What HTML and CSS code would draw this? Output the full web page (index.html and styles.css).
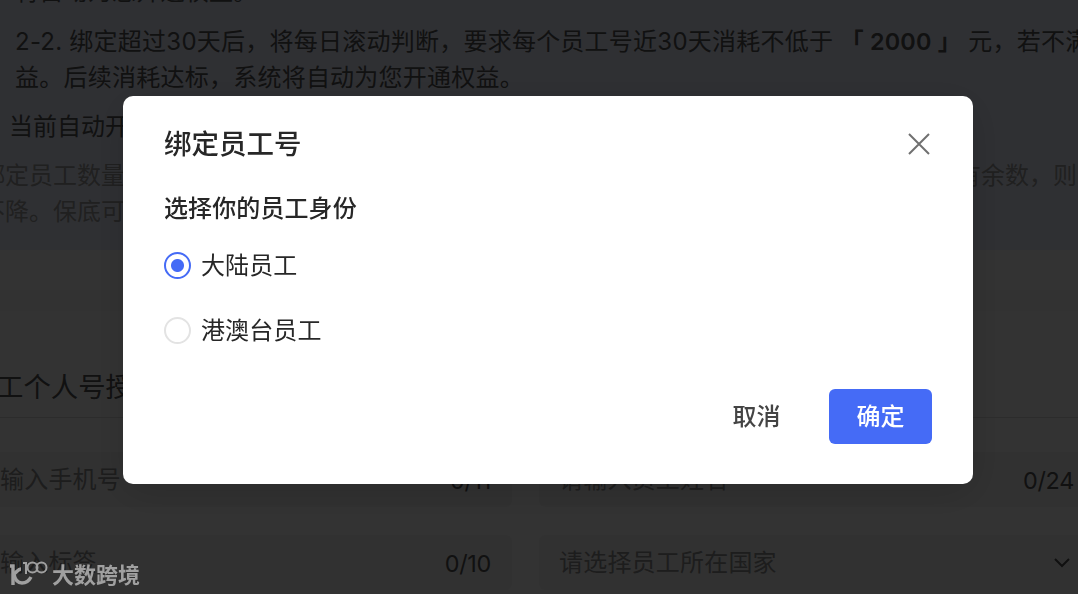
FILE: index.html
```
<!DOCTYPE html>
<html lang="zh-CN">
<head>
  <meta charset="UTF-8">
  <meta name="viewport" content="width=device-width, initial-scale=1.0">
  <title>绑定员工号</title>
  <link rel="stylesheet" href="styles.css">
</head>
<body>
  <div class="page">
    <div class="notice">
      <div class="rules">
        <p>将自动为您开通权益。</p>
        <p class="rule">2-2. 绑定超过30天后，将每日滚动判断，要求每个员工号近30天消耗不低于 <b>「 2000 」</b> 元，若不满<br>益。后续消耗达标，系统将自动为您开通权益。</p>
      </div>
      <p class="status">当前自动开通权益</p>
      <div class="hint">
        <p class="hint-line"><span>绑定员工数量</span><span class="hint-end">有余数，则</span></p>
        <p>不降。保底可</p>
      </div>
    </div>
    <div class="gap"></div>
    <div class="section">
      <h2>工个人号授权</h2>
      <div class="form">
        <div class="field"><span class="placeholder">输入手机号</span><span class="count">0/11</span></div>
        <div class="field"><span class="placeholder">请输入员工姓名</span><span class="count">0/24</span></div>
        <div class="field"><span class="placeholder">输入标签</span><span class="count">0/10</span></div>
        <div class="field">
          <span class="placeholder">请选择员工所在国家</span>
          <svg class="arrow" viewBox="0 0 18 12" width="18" height="12"><path d="M2 2l7 7 7-7"/></svg>
        </div>
      </div>
    </div>
  </div>

  <div class="overlay">
    <div class="modal">
      <div class="modal-header">
        <h3>绑定员工号</h3>
        <svg class="close" viewBox="0 0 24 24" width="24" height="24"><path d="M2 2l20 20M22 2L2 22"/></svg>
      </div>
      <h4>选择你的员工身份</h4>
      <label class="option"><i class="radio checked"></i><span>大陆员工</span></label>
      <label class="option"><i class="radio"></i><span>港澳台员工</span></label>
      <div class="modal-footer">
        <button class="cancel">取消</button>
        <button class="confirm">确定</button>
      </div>
    </div>
  </div>

  <div class="watermark">
    <svg viewBox="0 0 40 28" width="40" height="28">
      <path class="thick" d="M2 6h3v19"/>
      <path class="thick" d="M13 9c-3 0-4 3-7 5 1 6 4 9 8 9s7-2 9-6"/>
      <path class="thin" d="M15 3h3v11"/>
      <circle class="thin" cx="24.500" cy="7.500" r="5"/>
      <circle class="thin" cx="33.500" cy="7.500" r="5"/>
    </svg>
    <span>大数跨境</span>
  </div>
</body>
</html>
```

FILE: styles.css
```
* {
  box-sizing: border-box;
}
body {
  margin: 0;
  height: 594px;
  overflow: hidden;
  font-family: Inter, "Noto Sans CJK SC", sans-serif;
  font-size: 24px;
  color: #555555;
  background-color: #ffffff;
}
p, h2, h3, h4 {
  margin: 0;
  font-weight: 400;
}
.page {
  width: 1100px;
  height: 594px;
  overflow: hidden;
  white-space: nowrap;
}
.notice {
  height: 250px;
  background-color: #ebf0ff;
  overflow: hidden;
  line-height: 36px;
}
.rules {
  margin-top: -26px;
  padding-left: 15px;
  letter-spacing: 0.24px;
}
.rule {
  margin-top: 14px;
}
.rule b {
  font-size: 23.4px;
  font-weight: 600;
  letter-spacing: 0.2px;
}
.status {
  margin-top: 13px;
  padding-left: 9px;
}
.hint {
  margin-top: 13px;
  margin-left: -19px;
  color: #a0a0a0;
}
.hint-line {
  display: flex;
  justify-content: space-between;
  width: 1096px;
}
.gap {
  height: 21px;
  margin-top: 40px;
  background-color: #fafafa;
}
.section h2 {
  height: 107px;
  margin-left: -4px;
  padding-top: 56px;
  font-size: 27.4px;
  line-height: 40px;
  border-bottom: 1px solid #dddddd;
}
.form {
  display: grid;
  grid-template-columns: 532px 556px;
  gap: 28px 27px;
  margin-left: -20px;
  padding-top: 34px;
}
.field {
  display: flex;
  align-items: center;
  justify-content: space-between;
  height: 55px;
  padding: 0 21px 0 20px;
  border-radius: 6px;
  background-color: #f5f5f5;
}
.placeholder {
  padding-bottom: 4px;
  letter-spacing: 0.2px;
  color: #909090;
}
.count {
  padding-top: 2px;
  font-size: 23.4px;
  letter-spacing: -0.3px;
}
.arrow {
  margin-right: 3px;
  fill: none;
  stroke: #505050;
  stroke-width: 2;
}
.overlay {
  position: fixed;
  inset: 0;
  padding: 96px 0 0 123px;
  background-color: rgba(0, 0, 0, 0.8);
}
.modal {
  width: 850px;
  height: 388px;
  padding: 28px 41px 40px;
  border-radius: 10px;
  color: #272727;
  background-color: #ffffff;
  box-shadow: 0 8px 40px rgba(0, 0, 0, 0.15);
}
.modal-header {
  display: flex;
  align-items: center;
  justify-content: space-between;
}
.modal-header h3 {
  font-size: 27.5px;
  font-weight: 500;
  line-height: 40px;
}
.close {
  margin-right: 1px;
  fill: none;
  stroke: #707070;
  stroke-width: 2;
}
.modal h4 {
  margin-top: 27px;
  font-weight: 500;
  line-height: 36px;
  letter-spacing: 0.1px;
}
.option {
  display: flex;
  align-items: center;
  gap: 10px;
  height: 36px;
  margin-top: 20px;
  letter-spacing: 0.1px;
}
.option span {
  padding-bottom: 4px;
}
.option + .option {
  margin-top: 29px;
}
.radio {
  width: 27px;
  height: 27px;
  border: 2px solid #e3e3e3;
  border-radius: 50%;
}
.radio.checked {
  border-color: #456bf6;
  background: radial-gradient(circle, #456bf6 6px, #ffffff 7px);
}
.modal-footer {
  display: flex;
  justify-content: flex-end;
  gap: 21px;
  margin-top: 41px;
}
.modal-footer button {
  width: 103px;
  height: 55px;
  padding: 0 0 4px;
  border: none;
  border-radius: 6px;
  font-family: inherit;
  font-size: 24px;
  font-weight: 500;
}
.modal-footer .cancel {
  color: #444444;
  background: none;
}
.modal-footer .confirm {
  color: #ffffff;
  background-color: #456bf6;
}
.watermark {
  position: fixed;
  left: 8px;
  bottom: 4px;
  display: flex;
  align-items: center;
  gap: 4px;
  font-size: 22px;
  font-weight: 700;
  line-height: 30px;
  color: #a0a0a0;
}
.watermark svg {
  margin-top: -3px;
  fill: none;
  stroke: #a0a0a0;
}
.thick {
  stroke-width: 3.4;
}
.thin {
  stroke-width: 2;
}
```
